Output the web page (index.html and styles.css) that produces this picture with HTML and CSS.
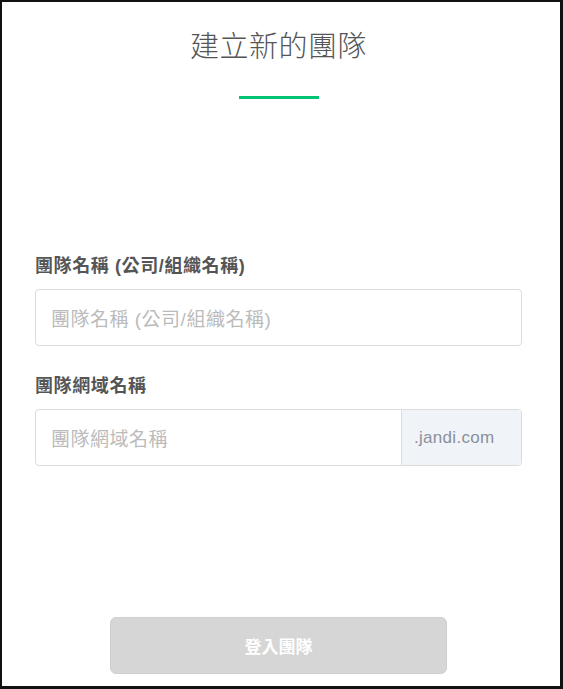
FILE: index.html
```html
<!DOCTYPE html>
<html lang="zh-Hant">
<head>
<meta charset="utf-8">
<link rel="stylesheet" href="styles.css">
</head>
<body>
<div class="frame">
  <header class="head">
    <h1 class="title">建立新的團隊</h1>
    <div class="accent"></div>
  </header>
  <form class="form">
    <div class="field">
      <label class="label">團隊名稱 (公司/組織名稱)</label>
      <div class="box"><span class="ph">團隊名稱 (公司/組織名稱)</span></div>
    </div>
    <div class="field">
      <label class="label">團隊網域名稱</label>
      <div class="box group">
        <span class="ph grow">團隊網域名稱</span>
        <span class="suffix">.jandi.com</span>
      </div>
    </div>
  </form>
  <div class="actions">
    <button class="btn" type="button">登入團隊</button>
  </div>
</div>
</body>
</html>
```

FILE: styles.css
```css
* { box-sizing: border-box; }
html, body { margin: 0; padding: 0; background: #fff; }
body {
  font-family: "Liberation Sans", "Noto Sans CJK TC", sans-serif;
  color: #555;
}
.frame {
  width: 563px;
  height: 689px;
  border-style: solid;
  border-color: #111;
  border-width: 2px 3px 3px 2px;
  display: flex;
  flex-direction: column;
  padding: 0 38px 0 33px;
}
.head {
  display: flex;
  flex-direction: column;
  align-items: center;
  padding-top: 22px;
}
.title {
  margin: 0;
  font-family: "Noto Sans CJK TC", sans-serif;
  font-weight: 300;
  font-size: 29px;
  line-height: 40px;
  color: #555;
  letter-spacing: 0.5px;
}
.accent {
  width: 80px;
  height: 3px;
  background: #00c473;
  margin-top: 32px;
}
.form {
  margin-top: 155px;
  display: flex;
  flex-direction: column;
  gap: 28px;
}
.field { display: flex; flex-direction: column; }
.label {
  font-weight: 700;
  font-size: 18px;
  line-height: 24px;
  letter-spacing: 0.6px;
  color: #555;
  margin-bottom: 11px;
}
.box {
  height: 57px;
  border: 1px solid #dcdcdc;
  border-radius: 4px;
  display: flex;
  align-items: center;
  padding-left: 15px;
  background: #fff;
}
.ph {
  font-size: 19px;
  letter-spacing: 0.5px;
  color: #bbb;
}
.group { padding-left: 0; overflow: hidden; }
.group .ph { padding-left: 15px; }
.grow { flex: 1; }
.suffix {
  align-self: stretch;
  width: 120px;
  border-left: 1px solid #dcdcdc;
  background: #f0f3f8;
  color: #8a909b;
  font-size: 17px;
  letter-spacing: 0.3px;
  display: flex;
  align-items: center;
  padding-left: 12px;
}
.actions {
  margin-top: auto;
  display: flex;
  justify-content: center;
  padding-bottom: 12px;
}
.btn {
  width: 337px;
  height: 57px;
  border: 1px solid #d0d0d0;
  border-radius: 6px;
  background: #d6d6d6;
  color: #fff;
  font-family: "Noto Sans CJK TC", sans-serif;
  font-weight: 700;
  font-size: 17px;
}
```
